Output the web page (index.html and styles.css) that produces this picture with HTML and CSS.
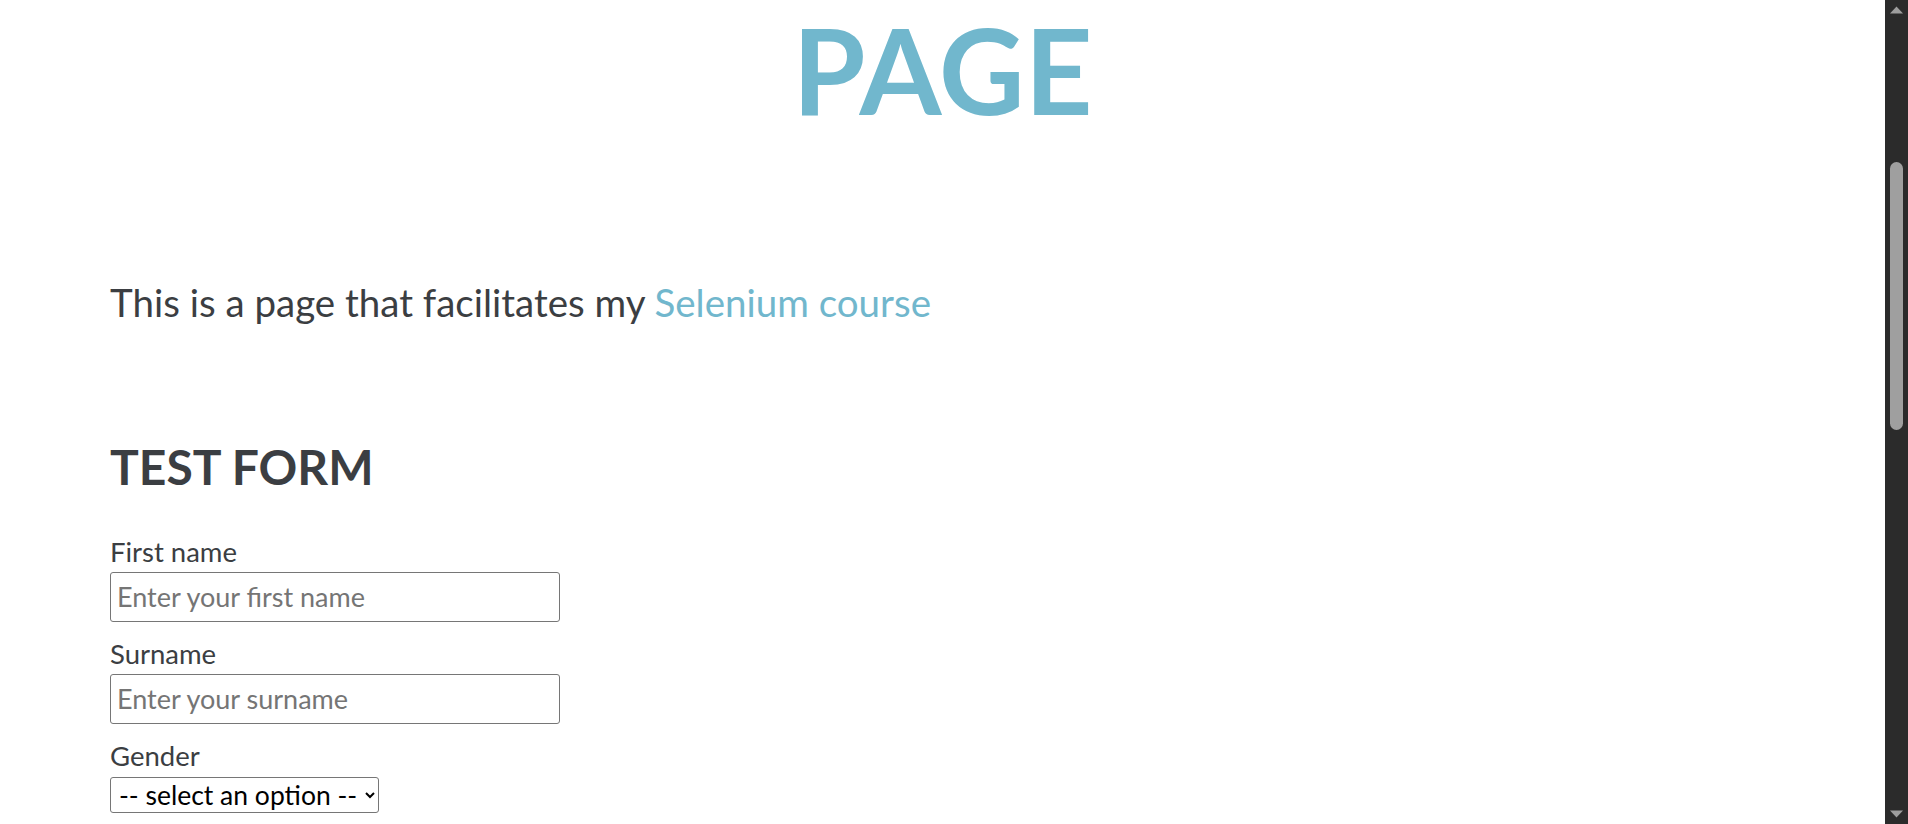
FILE: index.html
```html
<!DOCTYPE html>
<html lang="en">
<head>
<meta charset="utf-8">
<title>Page</title>
<link rel="stylesheet" href="styles.css">
</head>
<body>
<div class="layout">
  <main class="page">
    <h1 class="title">PAGE</h1>
    <div class="content">
      <p class="intro">This is a page that facilitates my <a class="intro-link" href="#">Selenium course</a></p>
      <h2 class="form-title">TEST FORM</h2>
      <form class="test-form">
        <label class="field-label" for="first-name">First name</label>
        <input class="text-input" id="first-name" type="text" placeholder="Enter your first name">
        <label class="field-label" for="surname">Surname</label>
        <input class="text-input" id="surname" type="text" placeholder="Enter your surname">
        <label class="field-label" for="gender">Gender</label>
        <select class="select-input" id="gender">
          <option>-- select an option --</option>
          <option>Male</option>
          <option>Female</option>
        </select>
      </form>
    </div>
  </main>
  <div class="scrollbar" aria-hidden="true">
    <div class="scroll-btn">
      <svg width="15" height="8" viewBox="0 0 15 8"><path d="M7.5 0.5 L14 7.5 L1 7.5 Z" fill="#9e9e9e"/></svg>
    </div>
    <div class="scroll-track">
      <div class="scroll-thumb"></div>
    </div>
    <div class="scroll-btn">
      <svg width="15" height="8" viewBox="0 0 15 8"><path d="M1 0.5 L14 0.5 L7.5 7.5 Z" fill="#9e9e9e"/></svg>
    </div>
  </div>
</div>
</body>
</html>
```
FILE: styles.css
```css
* {
  box-sizing: border-box;
}

html, body {
  margin: 0;
  padding: 0;
  height: 100%;
  background: #ffffff;
}

body {
  font-family: Lato, "Open Sans", sans-serif;
  color: #3b3e42;
  overflow: hidden;
}

.layout {
  display: flex;
  height: 100vh;
}

.page {
  flex: 1;
  min-width: 0;
}

.title {
  margin: 5px 0 0;
  font-size: 118px;
  line-height: 1.1;
  font-weight: 700;
  text-align: center;
  color: #71b7cd;
}

.content {
  padding-left: 110px;
}

.intro {
  margin: 144px 0 0;
  font-size: 38.5px;
  line-height: 1.2;
}

.intro-link {
  color: #71b7cd;
  text-decoration: none;
}

.form-title {
  margin: 113px 0 0;
  font-size: 48px;
  line-height: 1.2;
  font-weight: 700;
}

.test-form {
  display: flex;
  flex-direction: column;
  align-items: flex-start;
  margin-top: 42px;
}

.field-label {
  font-size: 27.5px;
  line-height: 28px;
  margin-bottom: 6px;
}

.text-input {
  width: 450px;
  height: 50px;
  margin: 0 0 18px;
  padding: 0 6px;
  border: 1px solid #767676;
  border-radius: 3px;
  font-family: Lato, "Open Sans", sans-serif;
  font-size: 27px;
  color: #000;
  background: #fff;
}

.text-input::placeholder {
  color: #757575;
}

.select-input {
  height: 36px;
  margin: 1px 0 0;
  padding: 0 4px 0 4px;
  font-family: Lato, "Open Sans", sans-serif;
  font-size: 26.5px;
  line-height: 34px;
  color: #000;
  background: #fff;
  border: 1px solid #767676;
  border-radius: 3px;
}

.scrollbar {
  width: 23px;
  flex: none;
  background: #2b2b2b;
  display: flex;
  flex-direction: column;
  align-items: center;
}

.scroll-btn {
  height: 20px;
  display: flex;
  align-items: center;
  justify-content: center;
}

.scroll-track {
  flex: 1;
  display: flex;
  flex-direction: column;
  align-items: center;
}

.scroll-thumb {
  margin-top: 142px;
  width: 13px;
  height: 268px;
  border-radius: 7px;
  background: #9f9f9f;
}
```
